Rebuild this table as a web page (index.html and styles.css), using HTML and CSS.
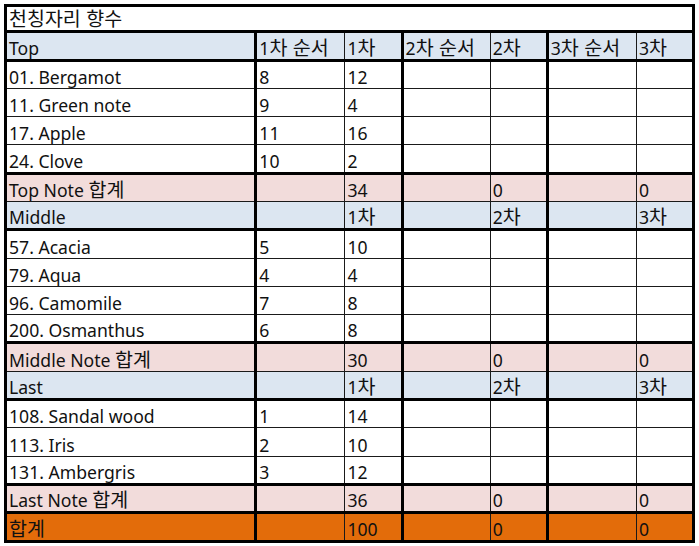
FILE: index.html
```html
<!DOCTYPE html>
<html lang="ko">
<head>
<meta charset="utf-8">
<title>천칭자리 향수</title>
<link rel="stylesheet" href="styles.css">
</head>
<body>
<table class="sheet">
  <colgroup>
    <col class="c-name"><col class="c-ord"><col class="c-val"><col class="c-ord2"><col class="c-val"><col class="c-ord"><col class="c-val">
  </colgroup>
  <tbody>
    <tr class="title"><td colspan="7"><span class="ko">천칭자리 향수</span></td></tr>
    <tr class="head sec-top"><td>Top</td><td>1<span class="ko">차 순서</span></td><td class="g">1<span class="ko">차</span></td><td>2<span class="ko">차 순서</span></td><td class="g">2<span class="ko">차</span></td><td>3<span class="ko">차 순서</span></td><td class="g">3<span class="ko">차</span></td></tr>
    <tr><td>01. Bergamot</td><td>8</td><td class="g">12</td><td></td><td class="g"></td><td></td><td class="g"></td></tr>
    <tr><td>11. Green note</td><td>9</td><td class="g">4</td><td></td><td class="g"></td><td></td><td class="g"></td></tr>
    <tr><td>17. Apple</td><td>11</td><td class="g">16</td><td></td><td class="g"></td><td></td><td class="g"></td></tr>
    <tr><td>24. Clove</td><td>10</td><td class="g">2</td><td></td><td class="g"></td><td></td><td class="g"></td></tr>
    <tr class="sum"><td>Top Note <span class="ko">합계</span></td><td></td><td class="g">34</td><td></td><td class="g">0</td><td></td><td class="g">0</td></tr>
    <tr class="head"><td>Middle</td><td></td><td class="g">1<span class="ko">차</span></td><td></td><td class="g">2<span class="ko">차</span></td><td></td><td class="g">3<span class="ko">차</span></td></tr>
    <tr><td>57. Acacia</td><td>5</td><td class="g">10</td><td></td><td class="g"></td><td></td><td class="g"></td></tr>
    <tr><td>79. Aqua</td><td>4</td><td class="g">4</td><td></td><td class="g"></td><td></td><td class="g"></td></tr>
    <tr><td>96. Camomile</td><td>7</td><td class="g">8</td><td></td><td class="g"></td><td></td><td class="g"></td></tr>
    <tr><td>200. Osmanthus</td><td>6</td><td class="g">8</td><td></td><td class="g"></td><td></td><td class="g"></td></tr>
    <tr class="sum"><td>Middle Note <span class="ko">합계</span></td><td></td><td class="g">30</td><td></td><td class="g">0</td><td></td><td class="g">0</td></tr>
    <tr class="head"><td>Last</td><td></td><td class="g">1<span class="ko">차</span></td><td></td><td class="g">2<span class="ko">차</span></td><td></td><td class="g">3<span class="ko">차</span></td></tr>
    <tr><td>108. Sandal wood</td><td>1</td><td class="g">14</td><td></td><td class="g"></td><td></td><td class="g"></td></tr>
    <tr><td>113. Iris</td><td>2</td><td class="g">10</td><td></td><td class="g"></td><td></td><td class="g"></td></tr>
    <tr><td>131. Ambergris</td><td>3</td><td class="g">12</td><td></td><td class="g"></td><td></td><td class="g"></td></tr>
    <tr class="sum"><td>Last Note <span class="ko">합계</span></td><td></td><td class="g">36</td><td></td><td class="g">0</td><td></td><td class="g">0</td></tr>
    <tr class="total"><td><span class="ko">합계</span></td><td></td><td class="g">100</td><td></td><td class="g">0</td><td></td><td class="g">0</td></tr>
  </tbody>
</table>
</body>
</html>
```

FILE: styles.css
```css
html, body {
  margin: 0;
  padding: 0;
  background: #ffffff;
}
body {
  padding: 4px 0 0 4px;
  font-family: "Noto Sans", "Noto Sans CJK KR", sans-serif;
  font-size: 17.6px;
  color: #111;
}
.ko {
  font-family: "Noto Sans CJK KR", sans-serif;
  font-size: 19.5px;
  letter-spacing: 0;
}
.sheet {
  border-collapse: collapse;
  table-layout: fixed;
  width: 691px;
  border: 3px solid #000;
}
.c-name { width: 250px; }
.c-ord { width: 89px; }
.c-ord2 { width: 88px; }
.c-val { width: 57px; }
.sheet tr { height: 28.3px; }
.sheet tr.title { height: 26px; }
.sheet tr.sec-top { height: 28.5px; }
.sheet td {
  padding: 0 2px 0 2px;
  line-height: 22px;
  vertical-align: bottom;
  white-space: nowrap;
  overflow: hidden;
  border: 1px solid #1a1a1a;
}
.sheet td:first-child { border-right: 3px solid #000; }
.sheet td.g { border-right: 3px solid #000; }
.title td {
  border: 3px solid #000;
  overflow: visible;
  vertical-align: middle;
}
.head td { background: #dce6f1; }
.sec-top td { border-top: 3px solid #000; }
.head td { border-bottom: 3px solid #000; }
.sum td { background: #f2dcdb; border-top: 3px solid #000; }
.total td { background: #e36c0a; border-top: 3px solid #000; }
```
